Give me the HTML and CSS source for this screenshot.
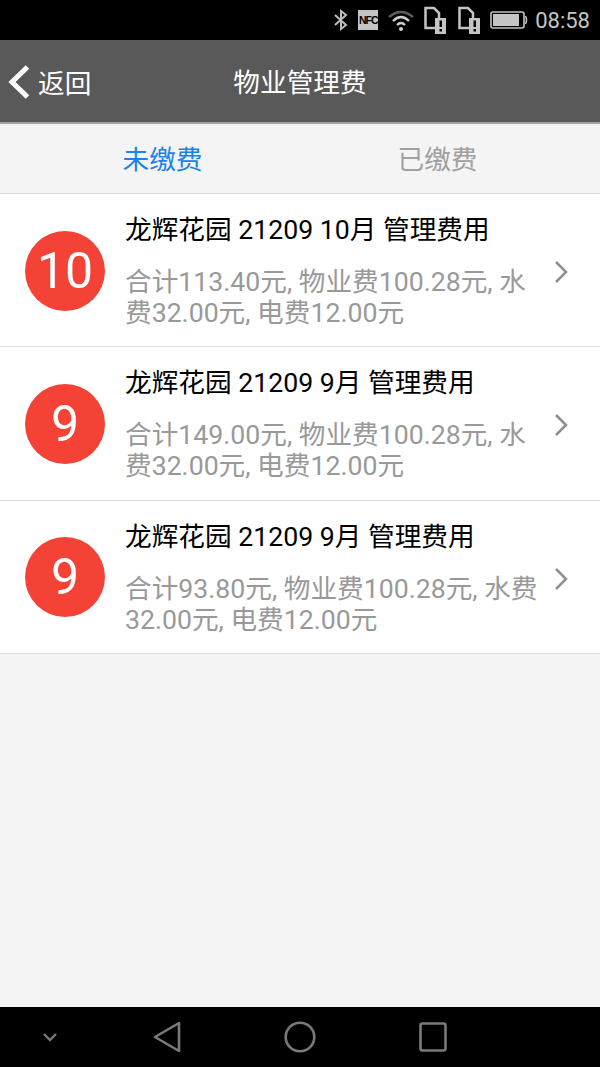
FILE: index.html
```html
<!DOCTYPE html>
<html>

<head>
    <title>物业管理费</title>
    <link rel="stylesheet" href="styles.css">
</head>

<body>
    <div id="main">
        <div class="status">
            <svg class="ico bt" width="16" height="24" viewBox="0 0 16 24">
                <path d="M2 7 L13 17 L8 21 V3 L13 7 L2 17" fill="none" stroke="#bdbdbd" stroke-width="2" />
            </svg>
            <div class="nfc">NFC</div>
            <svg class="ico" width="28" height="24" viewBox="0 0 28 24">
                <path d="M2 9 Q14 -1 26 9" fill="none" stroke="#5c5c5c" stroke-width="2.4" />
                <path d="M6 13 Q14 5 22 13" fill="none" stroke="#d0d0d0" stroke-width="2.4" />
                <path d="M10 17 Q14 13 18 17" fill="none" stroke="#d0d0d0" stroke-width="2.4" />
                <circle cx="14" cy="21" r="2" fill="#d0d0d0" />
            </svg>
            <svg class="ico sim" width="22" height="28" viewBox="0 0 22 28">
                <path d="M1.500 2 H10 L15 7 V22 H1.500 Z" fill="none" stroke="#c4c4c4" stroke-width="2.500" />
                <rect x="11" y="12" width="11" height="16" fill="#c4c4c4" />
                <rect x="15.5" y="14.500" width="2.500" height="6.500" fill="#000" />
                <rect x="15.5" y="23" width="2.500" height="2.500" fill="#000" />
            </svg>
            <svg class="ico sim" width="22" height="28" viewBox="0 0 22 28">
                <path d="M1.500 2 H10 L15 7 V22 H1.500 Z" fill="none" stroke="#c4c4c4" stroke-width="2.500" />
                <rect x="11" y="12" width="11" height="16" fill="#c4c4c4" />
                <rect x="15.5" y="14.500" width="2.500" height="6.500" fill="#000" />
                <rect x="15.5" y="23" width="2.500" height="2.500" fill="#000" />
            </svg>
            <svg class="ico" width="38" height="20" viewBox="0 0 38 20">
                <rect x="1" y="2" width="33" height="16" rx="2" fill="none" stroke="#c4c4c4" stroke-width="1.600" />
                <rect x="3" y="4" width="26" height="12" fill="#c4c4c4" />
                <path d="M35.500 6 Q37.500 10 35.500 14" fill="none" stroke="#c4c4c4" stroke-width="1.600" />
            </svg>
            <div class="time">08:58</div>
        </div>

        <div class="header">
            <div class="back">
                <svg width="22" height="36" viewBox="0 0 22 36">
                    <path d="M19.500 3 L4 18 L19.500 33" fill="none" stroke="#fff" stroke-width="5" />
                </svg>
                <span>返回</span>
            </div>
            <div class="title">物业管理费</div>
        </div>

        <div class="tabs">
            <div class="tab active">未缴费</div>
            <div class="tab">已缴费</div>
        </div>

        <div class="row">
            <div class="badge">10</div>
            <div class="info">
                <div class="name">龙辉花园 21209 10月 管理费用</div>
                <div class="desc">合计113.40元, 物业费100.28元, 水费32.00元, 电费12.00元</div>
            </div>
            <svg class="arrow" width="16" height="26" viewBox="0 0 16 26">
                <path d="M3 3 L13 13 L3 23" fill="none" stroke="#8e8e8e" stroke-width="2.500" />
            </svg>
        </div>
        <div class="row">
            <div class="badge">9</div>
            <div class="info">
                <div class="name">龙辉花园 21209 9月 管理费用</div>
                <div class="desc">合计149.00元, 物业费100.28元, 水费32.00元, 电费12.00元</div>
            </div>
            <svg class="arrow" width="16" height="26" viewBox="0 0 16 26">
                <path d="M3 3 L13 13 L3 23" fill="none" stroke="#8e8e8e" stroke-width="2.500" />
            </svg>
        </div>
        <div class="row">
            <div class="badge">9</div>
            <div class="info">
                <div class="name">龙辉花园 21209 9月 管理费用</div>
                <div class="desc">合计93.80元, 物业费100.28元, 水费32.00元, 电费12.00元</div>
            </div>
            <svg class="arrow" width="16" height="26" viewBox="0 0 16 26">
                <path d="M3 3 L13 13 L3 23" fill="none" stroke="#8e8e8e" stroke-width="2.500" />
            </svg>
        </div>

        <div class="blank"></div>

        <div class="nav">
            <svg width="16" height="10" viewBox="0 0 16 10">
                <path d="M2 2 L8 8 L14 2" fill="none" stroke="#7a7a7a" stroke-width="2.400" />
            </svg>
            <svg width="28" height="32" viewBox="0 0 28 32">
                <path d="M26 2 V30 L2 16 Z" fill="none" stroke="#7a7a7a" stroke-width="2.600" stroke-linejoin="round" />
            </svg>
            <svg width="32" height="32" viewBox="0 0 32 32">
                <circle cx="16" cy="16" r="14.300" fill="none" stroke="#7a7a7a" stroke-width="2.600" />
            </svg>
            <svg width="28" height="30" viewBox="0 0 28 30">
                <rect x="1.500" y="1.500" width="25" height="27" rx="2" fill="none" stroke="#7a7a7a" stroke-width="2.600" />
            </svg>
        </div>
    </div>
</body>

</html>
```

FILE: styles.css
```css
body {
    margin: 0;
    background-color: #f4f4f4;
    font-family: Roboto, "Noto Sans CJK SC", sans-serif;
}

#main {
    width: 600px;
    height: 1067px;
    display: flex;
    flex-direction: column;
    overflow: hidden;
}

.status {
    height: 40px;
    background-color: #000;
    display: flex;
    align-items: center;
    justify-content: flex-end;
    padding-right: 10px;
    color: #c4c4c4;
}

.ico {
    margin-left: 10px;
}

.sim {
    margin-left: 12px;
}

.nfc {
    width: 20px;
    height: 20px;
    margin-left: 9px;
    background-color: #c4c4c4;
    color: #000;
    font-family: "Liberation Sans", sans-serif;
    font-size: 10.500px;
    font-weight: bold;
    line-height: 20px;
    text-align: center;
    letter-spacing: -1px;
    overflow: hidden;
}

.nfc + .ico {
    margin-left: 9px;
}

.status .sim:nth-child(4) {
    margin-left: 9px;
}

.time {
    margin-left: 7px;
    font-size: 22px;
}

.header {
    height: 82px;
    background-color: #595959;
    border-bottom: 2px solid #a3a3a3;
    position: relative;
    display: flex;
    align-items: center;
    justify-content: center;
    color: #fff;
    font-size: 26.670px;
}

.title {
    padding-bottom: 2px;
}

.back {
    position: absolute;
    left: 8px;
    top: 22px;
    display: flex;
    align-items: center;
    gap: 8px;
}

.tabs {
    height: 69px;
    padding-left: 25px;
    display: flex;
    border-bottom: 1px solid #dcdcdc;
    font-size: 26.670px;
}

.tab {
    width: 275px;
    padding-bottom: 2px;
    display: flex;
    align-items: center;
    justify-content: center;
    color: #a0a0a0;
}

.tab.active {
    color: #1a82e8;
}

.row {
    height: 152.330px;
    background-color: white;
    border-bottom: 1px solid #dedede;
    display: flex;
    align-items: center;
    position: relative;
    padding-left: 25px;
}

.badge {
    width: 80px;
    height: 80px;
    margin-top: 1px;
    border-radius: 50%;
    background-color: #f44336;
    color: white;
    font-size: 50px;
    line-height: 80px;
    text-align: center;
    flex-shrink: 0;
}

.info {
    width: 415px;
    margin-left: 20px;
}

.name {
    color: #000;
    font-size: 26.670px;
    line-height: 36px;
    margin-top: 1px;
    margin-bottom: 19px;
}

.desc {
    color: #999;
    font-size: 26.670px;
    line-height: 31px;
}

.arrow {
    position: absolute;
    right: 31px;
    top: 65px;
}

.blank {
    flex: 1;
}

.nav {
    height: 60px;
    background-color: #000;
    display: flex;
    align-items: center;
    padding-left: 42px;
}

.nav svg:nth-child(2) {
    margin-left: 95px;
}

.nav svg:nth-child(3) {
    margin-left: 103px;
}

.nav svg:nth-child(4) {
    margin-left: 103px;
}
```
